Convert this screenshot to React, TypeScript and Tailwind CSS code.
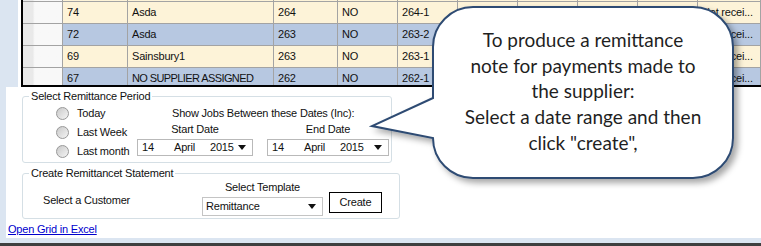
import React from 'react';

type Row = { id: string; supplier: string; job: string; paid: string; ref: string; status: string };

const rows: Row[] = [
  { id: '', supplier: '', job: '', paid: '', ref: '', status: '' },
  { id: '74', supplier: 'Asda', job: '264', paid: 'NO', ref: '264-1', status: 'Not recei...' },
  { id: '72', supplier: 'Asda', job: '263', paid: 'NO', ref: '263-2', status: 'Not recei...' },
  { id: '69', supplier: 'Sainsbury1', job: '263', paid: 'NO', ref: '263-1', status: 'Not recei...' },
  { id: '67', supplier: 'NO SUPPLIER ASSIGNED', job: '262', paid: 'NO', ref: '262-1', status: 'Not recei...' },
];

const cell = 'h-full border-r border-[#a3a3a3] pl-[4px] flex items-center whitespace-nowrap overflow-hidden';

function Radio({ label }: { label: string }) {
  return (
    <div className="flex h-[19px] items-center gap-[8px]">
      <span className="h-[13px] w-[13px] rounded-full border border-[#989898] bg-linear-to-br from-[#c9c9c9] to-[#f5f5f5]" />
      <span>{label}</span>
    </div>
  );
}

function Arrow() {
  return (
    <svg width="8" height="5" viewBox="0 0 8 5" className="shrink-0">
      <path d="M0 0h8L4 5z" fill="#111" />
    </svg>
  );
}

function DateBox({ width, year }: { width: string; year: string }) {
  return (
    <div className={`${width} flex h-[17px] items-center border border-[#b9b9b9] bg-white pl-[4px] pr-[6px]`}>
      <span className="w-[32px]">14</span>
      <span className="w-[36px]">April</span>
      <span className="flex-1">{year}</span>
      <Arrow />
    </div>
  );
}

export default function App() {
  return (
    <div className="relative h-[246px] w-[761px] overflow-hidden bg-white font-['Liberation_Sans',Arial,sans-serif] text-[11px] leading-[13px] tracking-[-0.2px] text-[#111]">
      {/* grid */}
      <div className="flex h-[87px]">
        <div className="w-[18px] bg-[#dbe5f1]" />
        <div className="w-[3px] bg-white" />
        <div className="flex-1 overflow-hidden border-b-2 border-l-2 border-black">
          <div className="-mt-[20px]">
            {rows.map((r, i) => (
              <div
                key={i}
                className={`flex h-[22px] border-b border-[#a3a3a3] ${i % 2 === 0 && i > 0 ? 'bg-[#b7c8e1]' : 'bg-[#fdf3d8]'}`}
              >
                <div className="h-full w-[40px] border-r border-[#a3a3a3] bg-linear-to-r from-[#e9e9e9] from-25% to-[#f8f8f8] to-30%" />
                <div className={`${cell} w-[65px]`}>{r.id}</div>
                <div className={`${cell} w-[146px] ${r.supplier.length > 12 ? 'tracking-[-0.6px]' : ''}`}>{r.supplier}</div>
                <div className={`${cell} w-[64px]`}>{r.job}</div>
                <div className={`${cell} w-[60px]`}>{r.paid}</div>
                <div className={`${cell} w-[60px]`}>{r.ref}</div>
                <div className={`${cell} w-[60px]`} />
                <div className={`${cell} w-[60px]`} />
                <div className={`${cell} w-[60px]`} />
                <div className={`${cell} w-[60px]`} />
                <div className={`${cell} flex-1`}>{r.status}</div>
              </div>
            ))}
          </div>
        </div>
      </div>

      {/* lower panel */}
      <div className="flex h-[151px]">
        <div className="w-[6px] bg-[#dbe5f1]" />
        <div className="flex-1 bg-white">
          <fieldset className="ml-[16px] mt-[3px] h-[73px] w-[370px] rounded-[3px] border border-[#d5dfe5]">
            <legend className="ml-[6px] px-[2px]">Select Remittance Period</legend>
            <div className="flex">
              <div className="w-[114px] pl-[33px] pt-[1px]">
                <Radio label="Today" />
                <Radio label="Last Week" />
                <Radio label="Last month" />
              </div>
              <div className="pt-[4px]">
                <div className="pl-[35px]">Show Jobs Between these Dates (Inc):</div>
                <div className="mt-[3px] flex gap-[14px]">
                  <div className="flex w-[116px] flex-col items-center">
                    <span>Start Date</span>
                  </div>
                  <div className="flex w-[122px] flex-col items-center">
                    <span>End Date</span>
                  </div>
                </div>
                <div className="mt-[3px] flex gap-[14px]">
                  <DateBox width="w-[116px]" year="2015" />
                  <DateBox width="w-[122px]" year="2015" />
                </div>
              </div>
            </div>
          </fieldset>

          <fieldset className="ml-[16px] mt-[4px] h-[52px] w-[378px] rounded-[3px] border border-[#d5dfe5]">
            <legend className="ml-[6px] px-[2px]">Create Remittancet Statement</legend>
            <div className="flex">
              <div className="w-[179px] pl-[20px] pt-[14px]">Select a Customer</div>
              <div className="flex w-[121px] flex-col items-center">
                <span className="pt-[1px]">Select Template</span>
                <div className="mt-[3px] flex h-[19px] w-full items-center border border-[#c4c4c4] bg-white pl-[3px] pr-[6px]">
                  <span className="flex-1">Remittance</span>
                  <Arrow />
                </div>
              </div>
              <button className="ml-[6px] mt-[12px] flex h-[21px] w-[53px] items-center justify-center border border-black bg-white">
                Create
              </button>
            </div>
          </fieldset>

          <a href="#" className="mt-[4px] block w-fit pl-[2px] text-[#0000cd] underline">
            Open Grid in Excel
          </a>
        </div>
      </div>
      <div className="h-[5px] bg-[#dbe5f1]" />
      <div className="h-[3px] bg-[#3f3f3f]" />

      {/* callout bubble */}
      <svg className="pointer-events-none absolute left-0 top-0" width="761" height="246" viewBox="0 0 761 246">
        <defs>
          <filter id="sh" x="-10%" y="-10%" width="130%" height="130%">
            <feDropShadow dx="4" dy="4" stdDeviation="3" floodColor="#000" floodOpacity="0.35" />
          </filter>
        </defs>
        <path
          d="M473 7H693A40 40 0 0 1 733 47V138A40 40 0 0 1 693 178H473A40 40 0 0 1 433 138L372 126L433 98V47A40 40 0 0 1 473 7Z"
          fill="#fff"
          stroke="#2e4b73"
          strokeWidth="2"
          filter="url(#sh)"
        />
      </svg>
      <div className="absolute left-[433px] top-[27px] w-[300px] text-center font-['Lato',sans-serif] text-[19px] leading-[25.7px] tracking-normal text-[#1f1f1f]">
        To produce a remittance
        <br />
        note for payments made to
        <br />
        the supplier:
        <br />
        Select a date range and then
        <br />
        click "create",
      </div>
    </div>
  );
}
